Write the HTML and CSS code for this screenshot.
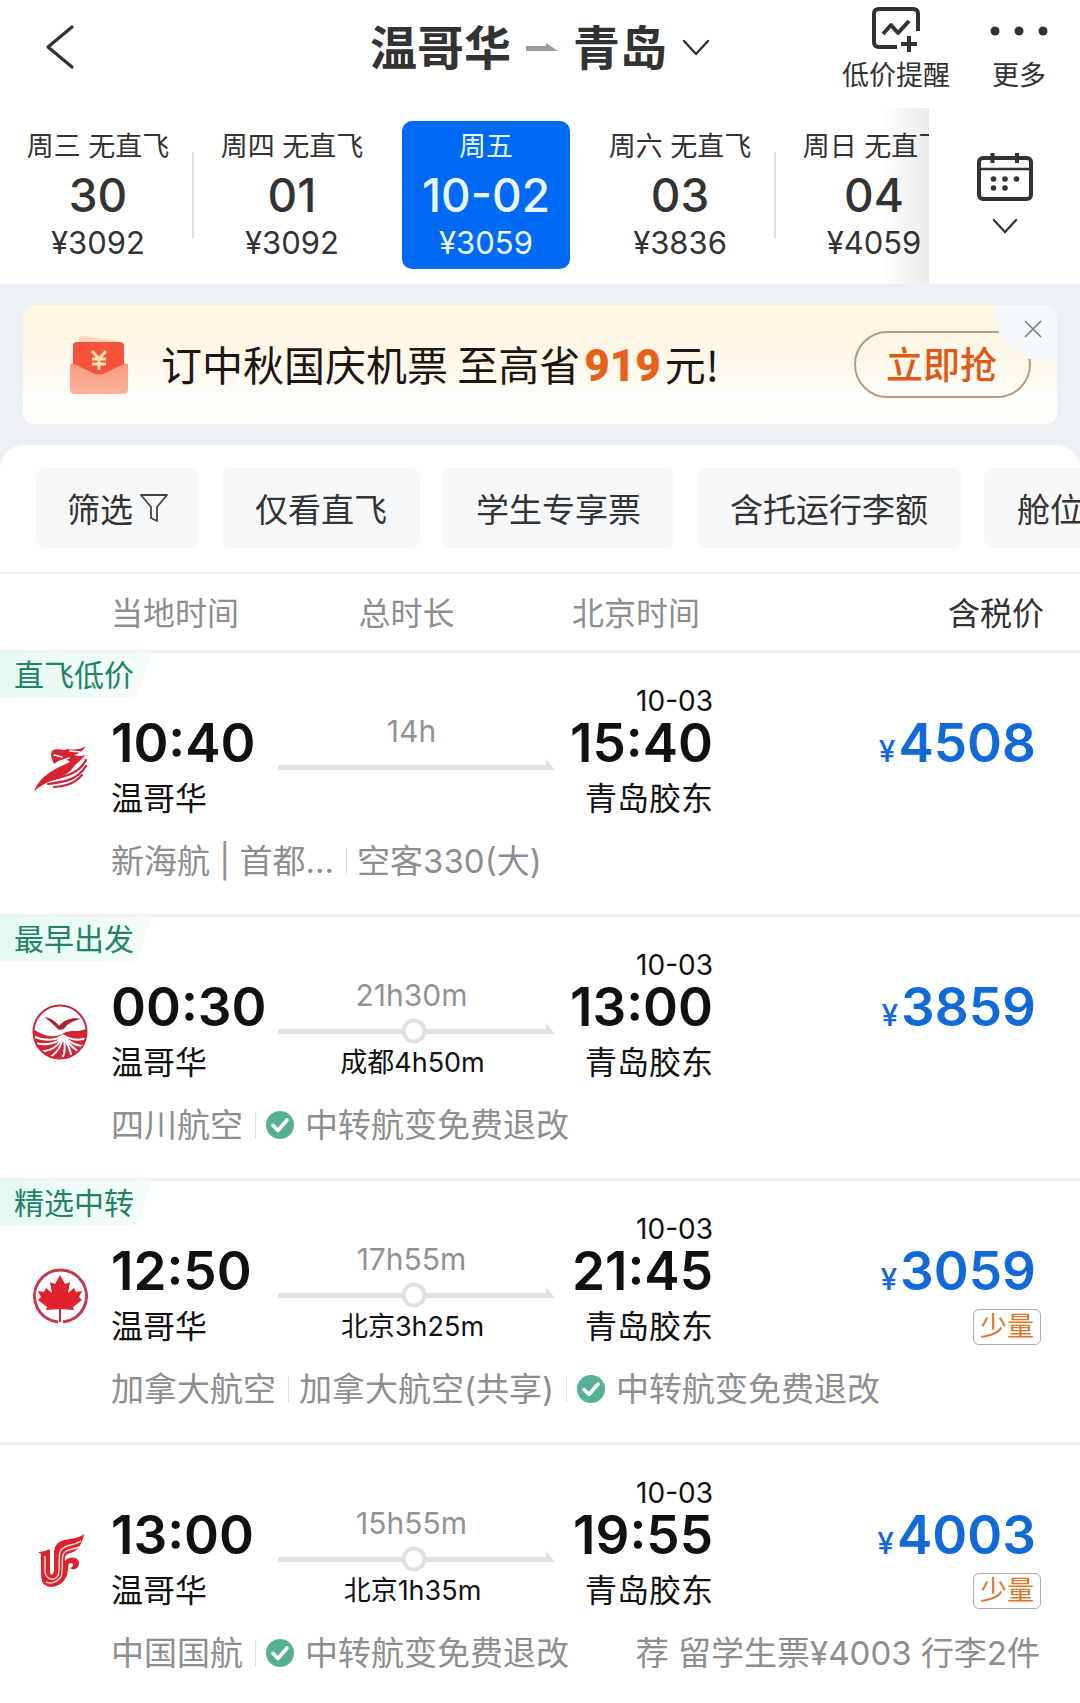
FILE: index.html
```html
<!DOCTYPE html>
<html lang="zh-CN">
<head>
<meta charset="utf-8">
<meta name="viewport" content="width=device-width, initial-scale=1">
<title>温哥华 - 青岛 机票</title>
<link rel="stylesheet" href="styles.css">
</head>
<body>
<svg class="defs" aria-hidden="true">
  <symbol id="chevron" viewBox="0 0 28 18"><path d="M2 2L14 15L26 2" fill="none" stroke="currentColor" stroke-width="2.4" stroke-linecap="round" stroke-linejoin="round"/></symbol>
  <symbol id="check" viewBox="0 0 28 28"><circle cx="14" cy="14" r="14" fill="#56b095"/><path d="M7 14.5L12 19.5L21 9" fill="none" stroke="#fff" stroke-width="3.6" stroke-linecap="round" stroke-linejoin="round"/></symbol>
</svg>

<header class="topbar">
  <button class="back" type="button" aria-label="返回">
    <svg width="30" height="46" viewBox="0 0 30 46"><path d="M27 3L3 23L27 43" fill="none" stroke="#333" stroke-width="3.2" stroke-linecap="round" stroke-linejoin="round"/></svg>
  </button>
  <h1 class="route">
    <button class="route-button" type="button">
      <span>温哥华</span>
      <svg width="32" height="12" viewBox="0 0 32 12"><path d="M0 4H20V1L32 9H0Z" fill="#999"/></svg>
      <span>青岛</span>
      <svg class="route-chevron" width="28" height="18"><use href="#chevron"/></svg>
    </button>
  </h1>
  <div class="actions">
    <button class="action" type="button">
      <svg width="50" height="46" viewBox="0 0 50 46" fill="none" stroke="#333" stroke-width="4" stroke-linecap="butt" stroke-linejoin="round"><path d="M26 41H8Q3 41 3 36V8Q3 3 8 3H42Q47 3 47 8V25"/><path d="M12 28L20 19L27 27L38 15"/><path d="M30 38H46M38 30V46"/></svg>
      <span>低价提醒</span>
    </button>
    <button class="action" type="button">
      <svg width="58" height="46" viewBox="0 0 58 46" fill="#333"><circle cx="5" cy="25" r="4.5"/><circle cx="29" cy="25" r="4.5"/><circle cx="53" cy="25" r="4.5"/></svg>
      <span>更多</span>
    </button>
  </div>
</header>

<nav class="calendar" aria-label="日期">
  <div class="days">
    <button class="day divided" type="button"><span>周三 无直飞</span><strong>30</strong><span class="fare">¥3092</span></button>
    <button class="day" type="button"><span>周四 无直飞</span><strong>01</strong><span class="fare">¥3092</span></button>
    <button class="day selected" type="button" aria-pressed="true"><span>周五</span><strong>10-02</strong><span class="fare">¥3059</span></button>
    <button class="day divided" type="button"><span>周六 无直飞</span><strong>03</strong><span class="fare">¥3836</span></button>
    <button class="day" type="button"><span>周日 无直飞</span><strong>04</strong><span class="fare">¥4059</span></button>
  </div>
  <button class="open-calendar" type="button" aria-label="打开日历">
    <svg width="56" height="50" viewBox="0 0 56 50" fill="none" stroke="#333"><rect x="2" y="6" width="52" height="41" rx="4" stroke-width="4"/><path d="M2 17H54" stroke-width="2.6"/><path d="M15.500 1V11M40 1V11" stroke-width="4"/><g fill="#333" stroke="none"><circle cx="16.500" cy="27" r="2.800"/><circle cx="28" cy="27" r="2.800"/><circle cx="39.500" cy="27" r="2.800"/><circle cx="16.500" cy="36" r="2.800"/><circle cx="28" cy="36" r="2.800"/></g></svg>
    <svg width="26" height="17"><use href="#chevron"/></svg>
  </button>
</nav>

<aside class="promo">
  <div class="banner">
    <svg class="envelope" width="60" height="62" viewBox="0 0 60 62">
      <defs><linearGradient id="pocket" x1="0" y1="0" x2="0" y2="1"><stop offset="0" stop-color="#f89a80"/><stop offset="1" stop-color="#fbb197"/></linearGradient></defs>
      <path d="M10 5Q10 2 14 2L48 7V16H10Z" fill="#fbd3bd"/>
      <rect x="4" y="8" width="51" height="40" rx="4" fill="#f6533f"/>
      <path d="M1 31Q2 28 5 30L24 39Q30 42 36 39L55 30Q58 28 59 31V55Q59 60 54 60H6Q1 60 1 55Z" fill="url(#pocket)"/>
      <path d="M23 17L30 25L37 17M23 25H37M23 30H37M30 25V36" fill="none" stroke="#ffe4ae" stroke-width="3"/>
    </svg>
    <p class="slogan">订中秋国庆机票 至高省<b>919</b>元!</p>
    <button class="grab" type="button">立即抢</button>
    <button class="close" type="button" aria-label="关闭">
      <svg width="18" height="18" viewBox="0 0 18 18"><path d="M1 1L17 17M17 1L1 17" stroke="#777d85" stroke-width="1.600"/></svg>
    </button>
  </div>
</aside>

<main class="results">
  <div class="filters">
    <button class="chip" type="button">筛选<svg width="28" height="30" viewBox="0 0 28 30"><path d="M1 2H27L17 14V28L11 25V14Z" fill="none" stroke="#444" stroke-width="1.800" stroke-linejoin="round"/></svg></button>
    <button class="chip" type="button">仅看直飞</button>
    <button class="chip" type="button">学生专享票</button>
    <button class="chip" type="button">含托运行李额</button>
    <button class="chip" type="button">舱位</button>
  </div>

  <div class="columns">
    <span class="col-depart">当地时间</span>
    <span class="col-total">总时长</span>
    <span class="col-arrive">北京时间</span>
    <span class="col-price">含税价</span>
  </div>

  <ol class="flights">
    <li class="flight">
      <span class="label">直飞低价</span>
      <div class="summary">
        <svg class="logo" width="56" height="56" viewBox="0 0 56 56" fill="none" stroke-linecap="round">
          <path d="M2 51C10 33 26 28 38 22C34 17 26 21 22 24C20 19 18 16 20 11C26 7 32 12 35 9C42 10 48 10 54 6C50 12 46 14 42 15C48 17 52 16 54 14C50 20 44 23 40 29C33 38 18 38 2 51Z" fill="#d8232f"/>
          <path d="M54 20C48 32 36 36 18 40M54 26C46 39 34 42 16 44M50 35C42 44 34 46 22 47" stroke="#cf2435" stroke-width="2.200"/>
          <path d="M22 15L30 17M26 22L37 18M38 11L48 12" stroke="#fff" stroke-width="1.600"/>
        </svg>
        <div class="depart"><time>10:40</time><span>温哥华</span></div>
        <div class="journey"><span class="total">14h</span>
          <svg class="track" viewBox="0 0 277 28" preserveAspectRatio="none"><path d="M0 12H268V6L277 17H0Z" fill="#e2e2e2"/></svg>
        </div>
        <div class="arrive"><small>10-03</small><time>15:40</time><span>青岛胶东</span></div>
        <div class="price"><strong><i>¥</i>4508</strong></div>
      </div>
      <div class="details"><span>新海航 | 首都...</span><span>空客330(大)</span></div>
    </li>

    <li class="flight">
      <span class="label">最早出发</span>
      <div class="summary">
        <svg class="logo" width="56" height="56" viewBox="0 0 56 56" fill="none" stroke="#c9283a">
          <clipPath id="sichuan"><circle cx="28" cy="28" r="26"/></clipPath>
          <g clip-path="url(#sichuan)">
            <path d="M0 24C14 34 24 34 32 29C38 25 46 29 56 24V56H0Z" fill="#cf2638" stroke="none"/>
            <path d="M0 32C14 38 26 36 31 31M0 39C16 42 27 39 31 32M2 48C20 48 27 42 31 32M14 56C25 50 30 42 31 32M28 58C34 50 34 42 31 32M40 56C39 46 36 40 31 32M50 50C43 46 37 40 31 33M56 42C46 43 37 38 31 32M56 34C46 37 38 36 31 31" stroke="#fff" stroke-width="2"/>
            <path d="M12 13C20 14 24 18 27 22C33 15 41 13 49 15C40 17 35 20 32 25L27 26C23 22 19 18 12 13Z" fill="#a92230" stroke="none"/>
          </g>
          <circle cx="28" cy="28" r="26.500" stroke-width="2"/>
        </svg>
        <div class="depart"><time>00:30</time><span>温哥华</span></div>
        <div class="journey"><span class="total">21h30m</span>
          <svg class="track" viewBox="0 0 277 28" preserveAspectRatio="none"><path d="M0 12H268V6L277 17H0Z" fill="#e2e2e2"/><circle cx="136" cy="14" r="10.500" fill="#fff" stroke="#e2e2e2" stroke-width="4"/></svg>
          <span class="stop">成都4h50m</span>
        </div>
        <div class="arrive"><small>10-03</small><time>13:00</time><span>青岛胶东</span></div>
        <div class="price"><strong><i>¥</i>3859</strong></div>
      </div>
      <div class="details"><span>四川航空</span><span class="perk"><svg width="28" height="28"><use href="#check"/></svg>中转航变免费退改</span></div>
    </li>

    <li class="flight">
      <span class="label">精选中转</span>
      <div class="summary">
        <svg class="logo" width="56" height="56" viewBox="0 0 56 56">
          <path d="M26 54A26 26 0 1 1 31 54" fill="none" stroke="#c4384c" stroke-width="3"/>
          <path d="M28 7L33 16L38 14L36 25L42 20L44 24L50 23L47 29L50 32L41 39L42 42L29 41L29 54H27L27 41L14 42L15 39L6 32L9 29L6 23L12 24L14 20L20 25L18 14L23 16Z" fill="#e0222c"/>
        </svg>
        <div class="depart"><time>12:50</time><span>温哥华</span></div>
        <div class="journey"><span class="total">17h55m</span>
          <svg class="track" viewBox="0 0 277 28" preserveAspectRatio="none"><path d="M0 12H268V6L277 17H0Z" fill="#e2e2e2"/><circle cx="136" cy="14" r="10.500" fill="#fff" stroke="#e2e2e2" stroke-width="4"/></svg>
          <span class="stop">北京3h25m</span>
        </div>
        <div class="arrive"><small>10-03</small><time>21:45</time><span>青岛胶东</span></div>
        <div class="price"><strong><i>¥</i>3059</strong><em>少量</em></div>
      </div>
      <div class="details"><span>加拿大航空</span><span>加拿大航空(共享)</span><span class="perk"><svg width="28" height="28"><use href="#check"/></svg>中转航变免费退改</span></div>
    </li>

    <li class="flight">
      <div class="summary">
        <svg class="logo" width="56" height="56" viewBox="0 0 56 56" fill="none">
          <path d="M52 2C49 18 42 20 36 22C32 24 33 27 33 29C38 23 47 25 47 31C47 37 41 39 38 36C42 35 42 31 39 31C35 31 37 37 35 43C32 52 24 55 18 55C10 54 9 47 9 41V22L6 20C10 20 14 19 18 17V39C18 45 22 43 22 38V22C22 10 30 8 38 7C44 6 48 5 52 2Z" fill="#d9252f"/>
          <path d="M49 9C42 14 31 12 28 20C26 26 29 42 25 45C20 50 14 46 13 40V24M47 15C40 18 33 17 31 23C29 29 32 42 28 46C24 51 18 52 14 50" stroke="#ffd7cf" stroke-width="1.400"/>
        </svg>
        <div class="depart"><time>13:00</time><span>温哥华</span></div>
        <div class="journey"><span class="total">15h55m</span>
          <svg class="track" viewBox="0 0 277 28" preserveAspectRatio="none"><path d="M0 12H268V6L277 17H0Z" fill="#e2e2e2"/><circle cx="136" cy="14" r="10.500" fill="#fff" stroke="#e2e2e2" stroke-width="4"/></svg>
          <span class="stop">北京1h35m</span>
        </div>
        <div class="arrive"><small>10-03</small><time>19:55</time><span>青岛胶东</span></div>
        <div class="price"><strong><i>¥</i>4003</strong><em>少量</em></div>
      </div>
      <div class="details"><span>中国国航</span><span class="perk"><svg width="28" height="28"><use href="#check"/></svg>中转航变免费退改</span><span class="offer">荐 留学生票¥4003 行李2件</span></div>
    </li>
  </ol>
</main>
</body>
</html>
```
FILE: styles.css
```css
* { box-sizing: border-box; }

body {
  margin: 0;
  background: #fff;
  color: #333;
  font-family: Inter, "Noto Sans CJK SC", sans-serif;
  font-size: 32px;
  overflow-x: hidden;
}

button {
  margin: 0;
  padding: 0;
  border: 0;
  background: none;
  color: inherit;
  font: inherit;
  white-space: nowrap;
  cursor: pointer;
}

svg { display: block; flex: none; }
.defs { position: absolute; width: 0; height: 0; }

/* Top bar */
.topbar {
  display: grid;
  grid-template-columns: 1fr auto 1fr;
  height: 108px;
  padding: 0 32px;
}
.back { justify-self: start; align-self: start; padding: 24px 0 0 13px; }
.route { margin: 0; font-size: 47px; font-weight: 700; line-height: 96px; align-self: start; }
.route-button { display: flex; align-items: center; gap: 15px; }
.actions { display: flex; justify-content: flex-end; gap: 40px; }
.action {
  display: flex;
  flex-direction: column;
  align-items: center;
  padding-top: 6px;
  font-size: 27px;
  line-height: 48px;
}

/* Date strip */
.calendar { display: flex; height: 176px; }
.days { flex: 1; min-width: 0; display: flex; overflow: hidden; position: relative; padding-left: 1px; }
.days::after {
  content: "";
  position: absolute;
  inset: 0 0 0 auto;
  width: 48px;
  background: linear-gradient(90deg, #0000, #00000014);
}
.day {
  flex: 0 0 194px;
  display: flex;
  flex-direction: column;
  align-items: center;
  align-self: flex-start;
  margin-top: 13px;
  padding: 2px 0;
  font-size: 27px;
  line-height: 48px;
}
.day strong { font-size: 46px; font-weight: 500; }
.day .fare { font-size: 31px; }
.divided {
  background: linear-gradient(#dcdcdc, #dcdcdc) right 1px top 31px / 2px 86px no-repeat;
}
.selected {
  flex-basis: 168px;
  margin-inline: 13px;
  border-radius: 10px;
  background: #006af6;
  color: #e9f8ff;
}
.open-calendar {
  flex: 0 0 151px;
  display: flex;
  flex-direction: column;
  align-items: center;
  padding-top: 44px;
  gap: 16px;
}

/* Promotion */
.promo { background: #edf1f5; padding: 21px 23px 45px; margin-bottom: -24px; }
.banner {
  position: relative;
  display: flex;
  align-items: center;
  height: 119px;
  padding: 0 26px 0 46px;
  border-radius: 10px;
  background: linear-gradient(#fff7de, #fff7e8 45%, #fffdf9 75%, #fffefc);
  overflow: hidden;
}
.slogan {
  flex: 1;
  margin: 0 0 0 32px;
  padding-bottom: 4px;
  color: #1d1611;
  font-family: "Noto Sans CJK SC", sans-serif;
  font-size: 41px;
  line-height: 60px;
  white-space: nowrap;
}
.slogan b {
  margin: 0 4px;
  color: #e8611c;
  font-family: Roboto, sans-serif;
  font-size: 44px;
  font-weight: 900;
  line-height: 48px;
}
.grab {
  width: 177px;
  height: 67px;
  border: 2px solid #b59c80;
  border-radius: 34px;
  padding: 0 2px 4px 0;
  color: #dd5a1a;
  font-size: 37px;
  font-weight: 500;
}
.close {
  position: absolute;
  top: 0;
  right: 0;
  display: grid;
  place-items: center;
  width: 62px;
  height: 56px;
  padding: 0 0 8px 14px;
  border-bottom-left-radius: 48px;
  background: #f6f9fc;
}

/* Results card */
.results { position: relative; border-radius: 24px 24px 0 0; background: #fff; }
.filters {
  display: flex;
  gap: 23px;
  padding: 23px 0 24px 36px;
  overflow: hidden;
}
.chip {
  flex: none;
  display: flex;
  align-items: center;
  gap: 7px;
  height: 80px;
  padding: 0 33px;
  border-radius: 8px;
  background: #f6f8fa;
  font-size: 33px;
}
.chip:first-child { padding-inline: 31px; }

.columns, .summary {
  display: grid;
  grid-template-columns: 111px 167fr 277fr 158fr 323fr;
  padding-right: 44px;
}
.columns {
  height: 78px;
  border-top: 2px solid #f0f1f2;
  line-height: 80px;
  color: #8e8e8e;
}
.col-depart { grid-column: 2; }
.col-total { text-align: center; padding-right: 20px; }
.col-arrive { text-align: right; padding-right: 13px; }
.col-price { justify-self: end; margin-right: -8px; color: #333; }

/* Flight list */
.flights { margin: 0; padding: 0; list-style: none; }
.flight {
  position: relative;
  padding: 32px 0 33px;
  border-top: 3px solid #f1f2f3;
  color: #111;
}
.flight:last-child { padding-bottom: 29px; }
.label {
  position: absolute;
  top: 0;
  left: 0;
  width: 152px;
  padding-left: 14px;
  background: linear-gradient(90deg, #e4faf2, #f5fdfa);
  clip-path: polygon(0 0, 100% 0, 90% 100%, 0 100%);
  color: #208363;
  font-size: 30px;
  line-height: 44px;
}
.summary { min-height: 140px; }
.logo { margin: 55px 0 0 32px; }
.depart, .arrive, .journey, .price { display: flex; flex-direction: column; }
.depart { padding-top: 32px; }
.arrive { align-items: flex-end; }
.arrive small { font-size: 28px; line-height: 32px; }
.flight time { font-size: 53px; font-weight: 600; line-height: 52px; }
.depart span, .arrive span { margin-top: 6px; line-height: 48px; }
.journey { padding-top: 31px; align-items: center; }
.total { padding-right: 10px; color: #929292; font-size: 30px; line-height: 30px; }
.track { width: 100%; height: 28px; margin-top: 7px; }
.stop { padding-right: 8px; font-size: 27px; line-height: 36px; }
.price { padding-top: 32px; align-items: flex-end; }
.price strong { color: #126ad8; font-size: 53px; font-weight: 600; line-height: 52px; }
.price i { margin-right: 3px; font-size: 30px; font-style: normal; font-weight: 500; line-height: 30px; }
.price em {
  margin: 12px -5px 0 0;
  padding: 0 6px;
  border: 1px solid #b9aaa4;
  border-radius: 6px;
  color: #d9762f;
  font-size: 27px;
  font-style: normal;
  line-height: 34px;
}
.details {
  display: flex;
  align-items: center;
  margin-top: 16px;
  padding: 0 40px 0 111px;
  color: #8e8e8e;
  font-size: 33px;
  line-height: 40px;
  white-space: nowrap;
}
.details span + span:not(.offer) {
  padding-left: 11px;
  margin-left: 12px;
  background: linear-gradient(#ddd, #ddd) left center / 1px 26px no-repeat;
}
.details .perk { display: flex; align-items: center; gap: 11px; }
.offer { margin-left: auto; }
```
